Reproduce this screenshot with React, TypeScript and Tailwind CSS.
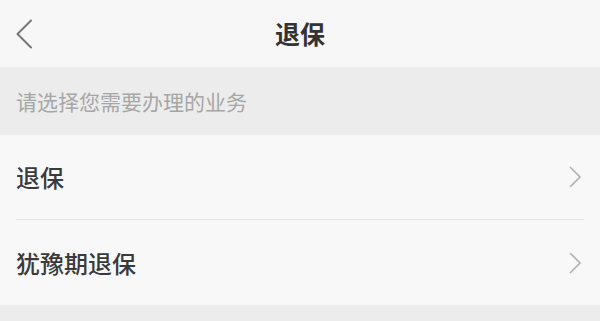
const items = ["退保", "犹豫期退保"];

const BackIcon = () => (
  <svg width="18" height="30" viewBox="0 0 18 30" className="absolute left-[15px] top-[19px]" fill="none">
    <polyline points="16,1.5 2.5,15 16,28.5" stroke="#777" strokeWidth="2" strokeLinecap="round" strokeLinejoin="round" />
  </svg>
);

const Arrow = () => (
  <svg width="14" height="22" viewBox="0 0 14 22" fill="none" className="mr-[2px]">
    <polyline points="2.5,1.5 12,11 2.5,20.5" stroke="#b0b0b0" strokeWidth="1.7" strokeLinecap="round" strokeLinejoin="round" />
  </svg>
);

export default function App() {
  return (
    <div
      className="w-[600px] h-[321px] bg-[#ececec] overflow-hidden"
      style={{ fontFamily: '"Noto Sans CJK SC", "Noto Sans", sans-serif' }}
    >
      {/* 顶部导航 */}
      <div className="relative h-[67px] bg-[#f7f7f7] flex items-center justify-center">
        <BackIcon />
        <span className="text-[25px] font-bold text-[#333] leading-none">退保</span>
      </div>

      {/* 提示 */}
      <div className="h-[68px] flex items-center px-4">
        <span className="text-[21px] text-[#a6a6a6] leading-none">请选择您需要办理的业务</span>
      </div>

      {/* 列表 */}
      <div className="bg-[#f8f8f8]">
        {items.map((t, i) => (
          <div key={t} className="px-4">
            <div
              className={`h-[85px] flex items-center justify-between ${
                i < items.length - 1 ? "border-b border-[#e6e6e6]" : ""
              }`}
            >
              <span className="text-[24px] font-medium text-[#3a3a3a] leading-none">{t}</span>
              <Arrow />
            </div>
          </div>
        ))}
      </div>
    </div>
  );
}
